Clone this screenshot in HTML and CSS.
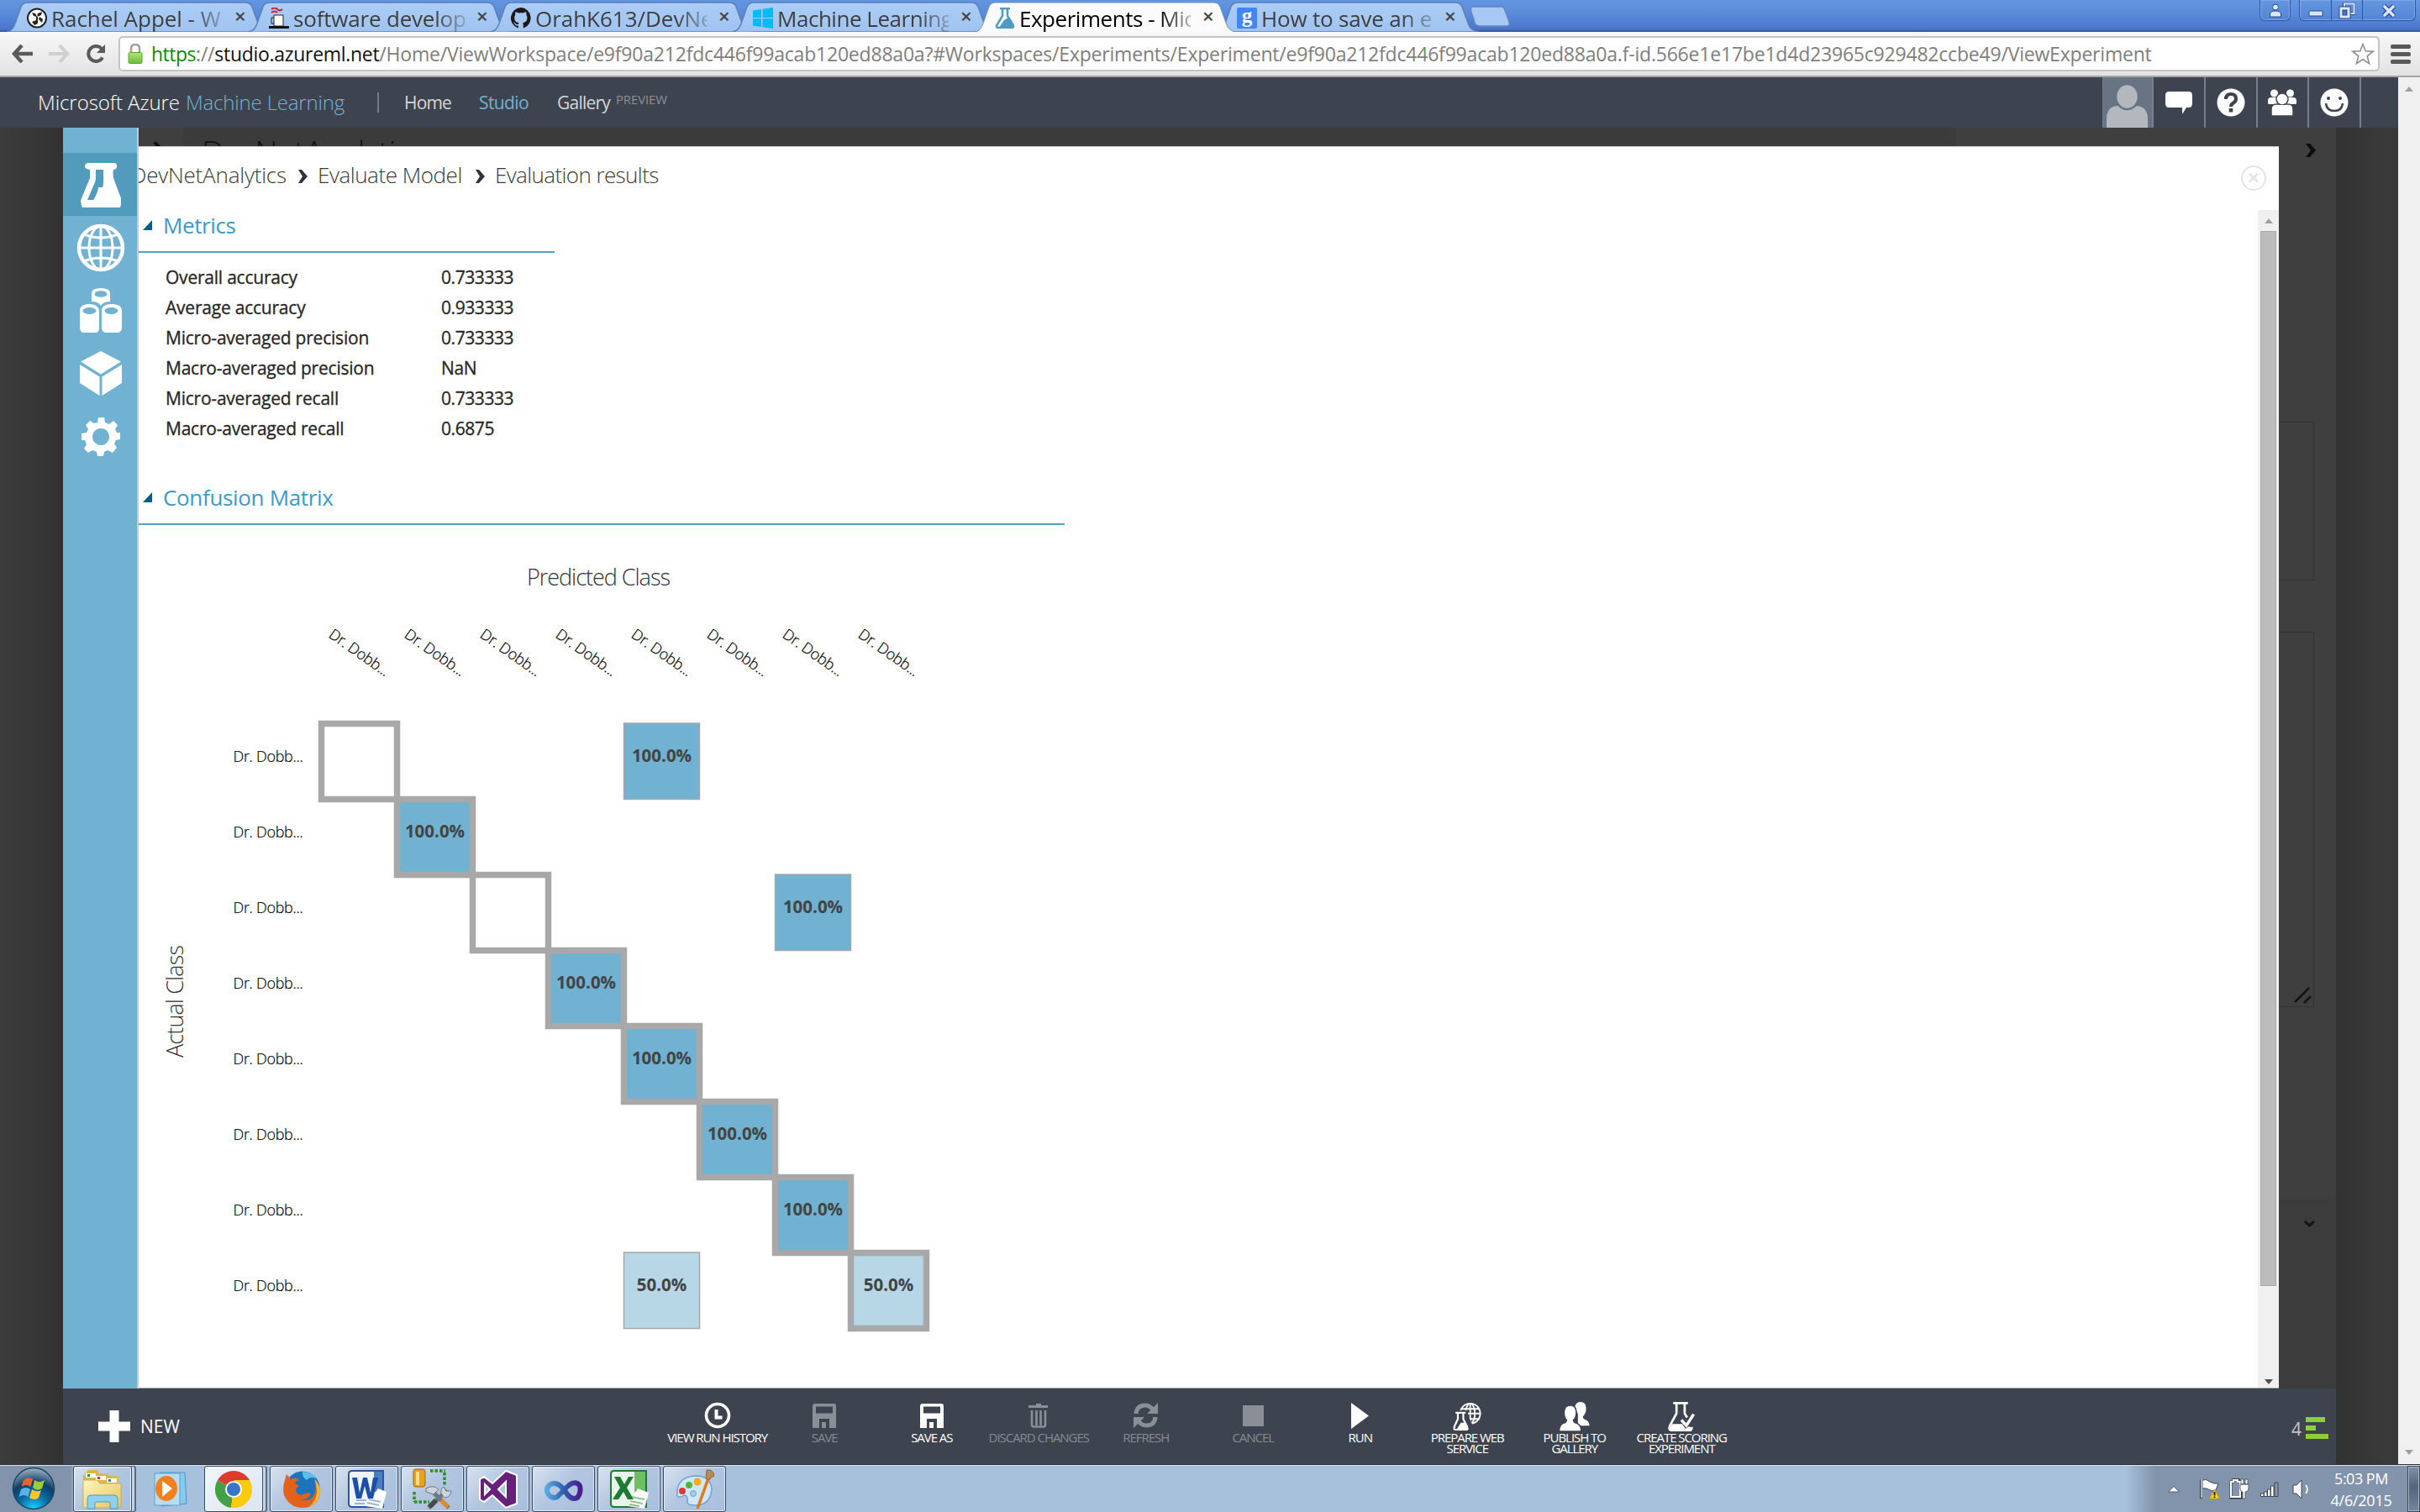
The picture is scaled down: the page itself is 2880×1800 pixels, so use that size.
FILE: index.html
```html
<!DOCTYPE html>
<html lang="en">
<head>
<meta charset="utf-8">
<title>Experiments - Microsoft Azure Machine Learning</title>
<link rel="stylesheet" href="styles.css">
</head>
<body>
<svg class="defs" aria-hidden="true">
  <defs>
    <linearGradient id="tabFill" x1="0" y1="0" x2="0" y2="1"><stop offset="0" stop-color="#abcdf8"/><stop offset="1" stop-color="#9fc3ef"/></linearGradient>
    <linearGradient id="lockFill" x1="0" y1="0" x2="0" y2="1"><stop offset="0" stop-color="#b4e07a"/><stop offset="1" stop-color="#6cbb3c"/></linearGradient>
    <radialGradient id="orbFill" cx=".5" cy="1" r="1"><stop offset="0" stop-color="#18d8ff"/><stop offset=".35" stop-color="#0b6fa8"/><stop offset=".65" stop-color="#0d3d66"/><stop offset="1" stop-color="#9fb4c6"/></radialGradient>
    <linearGradient id="paperFill" x1="0" y1="0" x2="1" y2="1"><stop offset="0" stop-color="#fff6c4"/><stop offset="1" stop-color="#e6c458"/></linearGradient>
    <linearGradient id="infFill" x1="0" y1="0" x2="1" y2="0"><stop offset="0" stop-color="#5aa9dc"/><stop offset=".5" stop-color="#2f5fae"/><stop offset="1" stop-color="#4b1c8c"/></linearGradient>
    <symbol id="tab" viewBox="0 0 312 38" preserveAspectRatio="none"><path d="M0 37.500C6 37 8 33 10 28L17 8Q19 3 25 3H284Q290 3 292 8L300 30Q303 37 312 37.500" fill="url(#tabFill)" stroke="#5b80b8" stroke-width="1.500"/></symbol>
    <symbol id="tabOn" viewBox="0 0 312 38" preserveAspectRatio="none"><path d="M0 38.500C6 37 8 33 10 28L17 8Q19 3 25 3H284Q290 3 292 8L300 30Q303 37 312 38.500" fill="#fbfbfb" stroke="#6f8fc4" stroke-width="1"/></symbol>
  </defs>
</svg>

<header class="tabs">
  <div class="tab"><svg class="tab-shape"><use href="#tab"/></svg>
    <svg class="fav" viewBox="0 0 24 25"><circle cx="12" cy="12.500" r="11" fill="#fff" stroke="#222" stroke-width="2"/><path d="M6 6l4 1 2 4-4-1zM18 5l-5 2-1 4 5-2zM6 17l5-2 2 4-4 2zM18 18l-4-4 1-3 4 3zM11 10h2v8h-2z" fill="#222"/></svg>
    <span class="tab-text">Rachel Appel - W</span><span class="tab-x">×</span></div>
  <div class="tab"><svg class="tab-shape"><use href="#tab"/></svg>
    <svg class="fav" viewBox="0 0 24 25"><path d="M3 2q4-3 7 0t6 0M3 6q4-3 7 0" stroke="#c8202c" stroke-width="2" fill="none"/><path d="M6 9h11v13H6z" fill="#fff" stroke="#222"/><path d="M6 12H3v7h3" fill="none" stroke="#222"/><path d="M0 22h24v3H0z" fill="#111"/></svg>
    <span class="tab-text ls2">software develop</span><span class="tab-x">×</span></div>
  <div class="tab"><svg class="tab-shape"><use href="#tab"/></svg>
    <svg class="fav" viewBox="0 0 24 25"><path d="M12 0a12 12.500 0 0 0-4 24.300c.6.1.8-.3.8-.6v-2.300c-3.300.7-4-1.500-4-1.500-.5-1.400-1.300-1.700-1.300-1.700-1.100-.8 0-.8 0-.8 1.200.1 1.900 1.300 1.900 1.300 1 1.900 2.800 1.300 3.500 1 .1-.8.4-1.300.8-1.600-2.700-.3-5.500-1.400-5.500-6.200 0-1.300.5-2.400 1.200-3.300-.1-.3-.5-1.600.1-3.300 0 0 1-.3 3.300 1.300a11 11 0 0 1 6 0c2.300-1.600 3.300-1.300 3.300-1.300.6 1.700.2 3 .1 3.300.8.9 1.200 2 1.200 3.300 0 4.800-2.800 5.900-5.500 6.200.4.400.8 1.100.8 2.300v3.300c0 .3.200.7.8.6A12 12.500 0 0 0 12 0z" fill="#1b1817"/></svg>
    <span class="tab-text">OrahK613/DevNet</span><span class="tab-x">×</span></div>
  <div class="tab"><svg class="tab-shape"><use href="#tab"/></svg>
    <svg class="fav" viewBox="0 0 24 25"><path d="M0 3.500l10-1.500v10H0zM11.500 1.800L24 0v12H11.500zM0 13h10v10L0 21.500zM11.500 13H24v12l-12.500-1.800z" fill="#00bcf2"/></svg>
    <span class="tab-text ls3">Machine Learning</span><span class="tab-x">×</span></div>
  <div class="tab on"><svg class="tab-shape"><use href="#tabOn"/></svg>
    <svg class="fav" viewBox="0 0 24 25"><path d="M6 1h12M9 1v9L2.500 20.500Q1 24 4 24h16q3 0 1.500-3.500L15 10V1" fill="none" stroke="#4b9cc0" stroke-width="2.500"/><path d="M11 15l5-3 5 9q1 3-1 3H5z" fill="#4b9cc0"/></svg>
    <span class="tab-text ls3">Experiments - Micro</span><span class="tab-x">×</span></div>
  <div class="tab"><svg class="tab-shape"><use href="#tab"/></svg>
    <span class="fav fav-g">g</span>
    <span class="tab-text ls2">How to save an e</span><span class="tab-x">×</span></div>
  <svg class="newtab" viewBox="0 0 50 25"><path d="M4 1h33q4 0 5 4l5 14q1 5-3 5H12q-5 0-6-4L1.500 6Q1 1 4 1z" fill="#a6c8f3" stroke="#6086c4" stroke-width="1.500"/></svg>
  <div class="winbtns">
    <div class="wb wb-user"><svg width="16" height="17" viewBox="0 0 16 17"><circle cx="8" cy="4.500" r="3.500" fill="#dbe7fa" stroke="#274a8c"/><path d="M1.500 16v-3q0-4 6.500-4t6.500 4v3z" fill="#dbe7fa" stroke="#274a8c"/></svg></div>
    <div class="wb-group">
      <div class="wb wb-min"><svg width="18" height="8" viewBox="0 0 18 8"><rect x="1" y="1" width="16" height="6" rx="1" fill="#dbe7fa" stroke="#274a8c"/></svg></div>
      <div class="wb wb-max"><svg width="20" height="20" viewBox="0 0 20 20"><path d="M7 5V1h12v12h-4" fill="none" stroke="#274a8c" stroke-width="4"/><path d="M7 5V1.500h11.500V13h-4" fill="none" stroke="#dbe7fa" stroke-width="2"/><path d="M3 7h9v10H3z" fill="#4a73c4" stroke="#274a8c" stroke-width="5"/><path d="M3 7h9v10H3z" fill="none" stroke="#dbe7fa" stroke-width="3"/></svg></div>
      <div class="wb wb-close"><svg width="18" height="16" viewBox="0 0 18 16"><path d="M3 2l12 12M15 2L3 14" stroke="#274a8c" stroke-width="6"/><path d="M3 2l12 12M15 2L3 14" stroke="#dbe7fa" stroke-width="3.500"/></svg></div>
    </div>
  </div>
</header>

<nav class="toolbar">
  <svg class="tb-icon" width="26" height="22" viewBox="0 0 26 22"><path d="M12 1L3 11l9 10M3 11h22" fill="none" stroke="#5a5a5a" stroke-width="4.500"/></svg>
  <svg class="tb-icon" width="26" height="22" viewBox="0 0 26 22"><path d="M14 1l9 10-9 10M23 11H1" fill="none" stroke="#cfcfcf" stroke-width="4"/></svg>
  <svg class="tb-icon reload" width="24" height="22" viewBox="0 0 24 22"><path d="M19 15.500A9 9 0 1 1 18 5" fill="none" stroke="#5a5a5a" stroke-width="4"/><path d="M22 0v10H12z" fill="#5a5a5a"/></svg>
  <div class="omnibox">
    <svg width="18" height="24" viewBox="0 0 18 24"><path d="M4 12V6q0-5 5-5t5 5v6" fill="none" stroke="#a0a0a0" stroke-width="2.500"/><rect x="1" y="10.500" width="16" height="13" rx="1.500" fill="url(#lockFill)" stroke="#5da233"/></svg>
    <div class="url"><span class="scheme">https</span>://<span class="host">studio.azureml.net</span>/Home/ViewWorkspace/e9f90a212fdc446f99acab120ed88a0a?#Workspaces/Experiments/Experiment/e9f90a212fdc446f99acab120ed88a0a.f-id.566e1e17be1d4d23965c929482ccbe49/ViewExperiment</div>
    <svg width="28" height="27" viewBox="0 0 28 27"><path d="M14 1.500l3.200 8.300 9 .4-7 5.600 2.400 8.900-7.600-5-7.600 5 2.400-8.900-7-5.600 9-.4z" fill="#fff" stroke="#8a8a8a" stroke-width="1.500"/></svg>
  </div>
  <div class="menu"><i></i><i></i><i></i></div>
</nav>

<div class="page">
  <div class="app">
    <header class="top">
      <span class="brand">Microsoft Azure</span><span class="brand-ml">Machine Learning</span>
      <span class="divider"></span>
      <span class="nav nav-home">Home</span><span class="nav nav-studio">Studio</span><span class="nav nav-gallery">Gallery</span><span class="preview">PREVIEW</span>
      <div class="top-icons">
        <div class="ti avatar"><svg width="61" height="60" viewBox="0 0 61 60"><path d="M6 60V50q0-16 14-16h20q15 0 15 16v10z" fill="#b2b8bd"/><ellipse cx="30.500" cy="23" rx="13.500" ry="15" fill="#b2b8bd" stroke="#687483" stroke-width="2.500"/></svg></div>
        <div class="ti"><svg width="34" height="28" viewBox="0 0 34 28"><path d="M5 1h24q4 0 4 5v9q0 5-4 5h-3l-5 8 0-8H5q-4 0-4-5V6q0-5 4-5z" fill="#fff"/></svg></div>
        <div class="ti"><svg width="34" height="34" viewBox="0 0 34 34"><circle cx="17" cy="17" r="16.500" fill="#fff"/><path d="M11 13q0-6 6-6t6 5.500q0 3-3 5-3 1.700-3 4.500" fill="none" stroke="#3e444f" stroke-width="4.200"/><rect x="14.700" y="24" width="4.600" height="4.500" fill="#3e444f"/></svg></div>
        <div class="ti"><svg width="34" height="32" viewBox="0 0 34 32"><g fill="#fff"><circle cx="7.500" cy="5" r="4.500"/><circle cx="26.500" cy="5" r="4.500"/><path d="M0 17v-3q0-4 4-4h7q3 0 3 4v4H2q-2 0-2-1zM34 17v-3q0-4-4-4h-7q-3 0-3 4v4h12q2 0 2-1z"/></g><g fill="#fff" stroke="#3e444f" stroke-width="1.500"><path d="M4 32v-8q0-6 6-6h14q6 0 6 6v8z"/><ellipse cx="17" cy="12" rx="7" ry="7"/></g><path d="M5 31v-7q0-5 5-5h14q5 0 5 5v7z" fill="#fff"/></svg></div>
        <div class="ti"><svg width="34" height="34" viewBox="0 0 34 34"><circle cx="17" cy="17" r="16.500" fill="#fff"/><circle cx="10" cy="12" r="2" fill="#3e444f"/><circle cx="24" cy="12" r="2" fill="#3e444f"/><path d="M7 18q1 9 10 9t10-9" fill="none" stroke="#3e444f" stroke-width="2.500"/></svg></div>
      </div>
    </header>

    <div class="stage">
      <div class="gutter-left"></div>
      <div class="work">
        <div class="work-row">
          <aside class="side">
            <div class="tile on"><svg width="48" height="54" viewBox="0 0 48 54"><path d="M8 0h32q3 0 3 4t-4 4v0q-1 2 0 10l9 24q1 4-1 11H2q-3-7-1-11l10-24V8q-6-1-6-4t3-4z" fill="#fff"/><path d="M18 8h9v16q0 3-1 5h-5q-1 8-6 15h-7l9-21q1-3 1-6z" fill="#529bbd"/></svg></div>
            <div class="tile"><svg width="58" height="58" viewBox="0 0 58 58" fill="none" stroke="#fff"><circle cx="29" cy="29" r="26" stroke-width="4.500"/><g stroke-width="3"><path d="M29 3v52M3 29h52M9 13q20 8 40 0M9 45q20-8 40 0"/><ellipse cx="29" cy="29" rx="14" ry="26"/></g></svg></div>
            <div class="tile"><svg width="50" height="53" viewBox="0 0 50 53"><g fill="#fff"><path d="M14 6q0-6 11-6t11 6v10q-8 0-11 5-3-5-11-5z"/><path d="M0 27q0-8 11-8t12 8v19q0 7-4 7H4q-4 0-4-7zM26 27q0-8 12-8t12 8v19q0 7-5 7H31q-5 0-5-7z"/></g><g fill="#71b1d1"><ellipse cx="25" cy="7" rx="7.500" ry="3.800"/><ellipse cx="11.500" cy="27" rx="8" ry="4"/><ellipse cx="37.500" cy="27" rx="8" ry="4"/></g></svg></div>
            <div class="tile"><svg width="50" height="53" viewBox="0 0 50 53" fill="#fff"><path d="M25 0l24 12.500-24 15L1 12.500zM0 16l23.500 14.500V53L0 38zM50 16L26.500 30.500V53L50 38z"/></svg></div>
            <div class="tile"><svg width="46" height="46" viewBox="0 0 46 46"><path fill-rule="evenodd" fill="#fff" d="M19 6l1-6h7l1 6 5 2 5-4 5 5-3 5 2 4h4v8l-5 1-2 4 3 5-5 6-6-3-4 2-1 5h-7l-1-5-5-2-5 3-5-5 3-5-2-5H0v-8l6-1 2-4-3-5 5-5 5 3zM23 13a10 10 0 1 0 .1 0z"/></svg></div>
          </aside>
          <div class="center">
            <div class="behind"><svg class="bchev" width="12" height="16" viewBox="0 0 12 16"><path d="M2 0l7 8-7 8" fill="none" stroke="#111" stroke-width="4"/></svg><span>DevNetAnalytics</span></div>
            <section class="dialog">
              <div class="crumbs">
                <span class="c1">DevNetAnalytics</span><svg class="chev" width="11" height="16" viewBox="0 0 11 16"><path d="M0 0h4l7 8-7 8H0l5-8z" fill="#2c3440"/></svg>
                <span class="c2">Evaluate Model</span><svg class="chev" width="11" height="16" viewBox="0 0 11 16"><path d="M0 0h4l7 8-7 8H0l5-8z" fill="#2c3440"/></svg>
                <span class="c3">Evaluation results</span>
                <svg class="close" width="30" height="30" viewBox="0 0 30 30" fill="none" stroke="#e4e4e4"><circle cx="15" cy="15" r="14" stroke-width="2"/><path d="M10 9.500l10 10M20 9.500l-10 10" stroke-width="2.800"/></svg>
              </div>
              <div class="dialog-body">
                <div class="content">
                  <h2 class="h-metrics"><svg width="11" height="12" viewBox="0 0 11 12"><path d="M11 0v12H0z" fill="#0d5b85"/></svg><span class="t-met">Metrics</span></h2>
                  <dl class="metrics">
                    <dt>Overall accuracy</dt><dd>0.733333</dd>
                    <dt>Average accuracy</dt><dd>0.933333</dd>
                    <dt>Micro-averaged precision</dt><dd>0.733333</dd>
                    <dt>Macro-averaged precision</dt><dd>NaN</dd>
                    <dt>Micro-averaged recall</dt><dd>0.733333</dd>
                    <dt>Macro-averaged recall</dt><dd>0.6875</dd>
                  </dl>
                  <h2 class="h-matrix"><svg width="11" height="12" viewBox="0 0 11 12"><path d="M11 0v12H0z" fill="#0d5b85"/></svg><span class="t-mat">Confusion Matrix</span></h2>
                  <svg class="chart" width="1102" height="1027" viewBox="165 625 1102 1027">
                    <text class="axis" x="627" y="697" textLength="171">Predicted Class</text>
                    <text class="axis" transform="translate(218 1259) rotate(-90)" textLength="134">Actual Class</text>
                    <g class="lab">
                      <text transform="translate(390 758) rotate(35)">Dr. Dobb...</text>
                      <text transform="translate(480 758) rotate(35)">Dr. Dobb...</text>
                      <text transform="translate(570 758) rotate(35)">Dr. Dobb...</text>
                      <text transform="translate(660 758) rotate(35)">Dr. Dobb...</text>
                      <text transform="translate(750 758) rotate(35)">Dr. Dobb...</text>
                      <text transform="translate(840 758) rotate(35)">Dr. Dobb...</text>
                      <text transform="translate(930 758) rotate(35)">Dr. Dobb...</text>
                      <text transform="translate(1020 758) rotate(35)">Dr. Dobb...</text>
                      <text x="277.500" y="907">Dr. Dobb...</text>
                      <text x="277.500" y="997">Dr. Dobb...</text>
                      <text x="277.500" y="1087">Dr. Dobb...</text>
                      <text x="277.500" y="1177">Dr. Dobb...</text>
                      <text x="277.500" y="1267">Dr. Dobb...</text>
                      <text x="277.500" y="1357">Dr. Dobb...</text>
                      <text x="277.500" y="1447">Dr. Dobb...</text>
                      <text x="277.500" y="1537">Dr. Dobb...</text>
                    </g>
                    <g class="off">
                      <rect x="742.500" y="861" width="90" height="90.500"/>
                      <rect x="922.500" y="1041" width="90" height="90.500"/>
                      <rect class="half" x="742.500" y="1491" width="90" height="90.500"/>
                    </g>
                    <g class="diag">
                      <rect class="none" x="382.500" y="861.500" width="90" height="90"/>
                      <rect x="472.500" y="951.500" width="90" height="90"/>
                      <rect class="none" x="562.500" y="1041.500" width="90" height="90"/>
                      <rect x="652.500" y="1131.500" width="90" height="90"/>
                      <rect x="742.500" y="1221.500" width="90" height="90"/>
                      <rect x="832.500" y="1311.500" width="90" height="90"/>
                      <rect x="922.500" y="1401.500" width="90" height="90"/>
                      <rect class="half" x="1012.500" y="1491.500" width="90" height="90"/>
                    </g>
                    <g class="pct">
                      <text x="787.500" y="907">100.0%</text>
                      <text x="517.500" y="997">100.0%</text>
                      <text x="967.500" y="1087">100.0%</text>
                      <text x="697.500" y="1177">100.0%</text>
                      <text x="787.500" y="1267">100.0%</text>
                      <text x="877.500" y="1357">100.0%</text>
                      <text x="967.500" y="1447">100.0%</text>
                      <text x="787.500" y="1537">50.0%</text>
                      <text x="1057.500" y="1537">50.0%</text>
                    </g>
                  </svg>
                </div>
                <div class="scroll">
                  <svg width="10" height="6" viewBox="0 0 10 6"><path d="M5 0l5 6H0z" fill="#a0a0a0"/></svg>
                  <div class="thumb"></div>
                  <svg class="dn" width="10" height="6" viewBox="0 0 10 6"><path d="M0 0h10L5 6z" fill="#505050"/></svg>
                </div>
              </div>
            </section>
          </div>
          <aside class="props">
            <svg class="p-chev" width="12" height="16" viewBox="0 0 12 16"><path d="M0 0h5l7 8-7 8H0l6-8z" fill="#0c0c0c"/></svg>
            <div class="pbox pbox1"></div>
            <div class="pbox pbox2"><svg width="22" height="22" viewBox="0 0 22 22"><path d="M2 19L19 2M13 20l8-8" stroke="#141414" stroke-width="2.800"/></svg></div>
            <div class="p-foot"><svg width="13" height="9" viewBox="0 0 13 9"><path d="M1 2l5.500 5L12 2" fill="none" stroke="#111" stroke-width="3"/></svg></div>
          </aside>
        </div>
        <footer class="cmds">
          <div class="new"><svg width="38" height="38" viewBox="0 0 38 38"><path d="M13.500 0h11v13.500H38v11H24.500V38h-11V24.500H0v-11h13.500z" fill="#fff"/></svg><span>NEW</span></div>
          <div class="cmd-list">
            <div class="cmd"><div class="ci"><svg width="32" height="32" viewBox="0 0 32 32"><circle cx="16" cy="16" r="13.500" fill="none" stroke="#fff" stroke-width="3.600"/><path d="M14.500 9v9.500h7" fill="none" stroke="#fff" stroke-width="4"/></svg></div><span>VIEW RUN HISTORY</span></div>
            <div class="cmd off"><div class="ci"><svg width="28" height="29" viewBox="0 0 28 29"><path fill-rule="evenodd" d="M3 0h22q3 0 3 3v26H0V3q0-3 3-3zM4 3.500v8h20v-8zM8 18v11h3v-7h5v7h4V18z" fill="#8a8f97"/></svg></div><span>SAVE</span></div>
            <div class="cmd"><div class="ci"><svg width="28" height="29" viewBox="0 0 28 29"><path fill-rule="evenodd" d="M3 0h22q3 0 3 3v26H0V3q0-3 3-3zM4 3.500v8h20v-8zM8 18v11h3v-7h5v7h4V18z" fill="#fff"/></svg></div><span>SAVE AS</span></div>
            <div class="cmd off"><div class="ci"><svg width="24" height="29" viewBox="0 0 24 29"><path d="M9 0h6v2h8v3H0V2h9z" fill="#8a8f97"/><path d="M4 8v17q0 2.500 2 2.500h12q2 0 2-2.500V8M9.500 8v18M14.500 8v18" fill="none" stroke="#8a8f97" stroke-width="2.600"/></svg></div><span>DISCARD CHANGES</span></div>
            <div class="cmd off"><div class="ci"><svg width="29" height="30" viewBox="0 0 29 30"><path d="M3 13Q4 3 14 3q5 0 9 5M26 17q-1 10-11 10-5 0-9-5" fill="none" stroke="#8a8f97" stroke-width="5"/><path d="M29 0v13H16zM0 30V17h13z" fill="#8a8f97"/></svg></div><span>REFRESH</span></div>
            <div class="cmd off"><div class="ci"><svg width="25" height="25" viewBox="0 0 25 25"><path d="M0 0h25v25H0z" fill="#8a8f97"/></svg></div><span>CANCEL</span></div>
            <div class="cmd"><div class="ci"><svg width="21" height="31" viewBox="0 0 21 31"><path d="M0 0l21 15.500L0 31z" fill="#fff"/></svg></div><span>RUN</span></div>
            <div class="cmd tall"><div class="ci"><svg width="36" height="34" viewBox="0 0 36 37"><g fill="none" stroke="#fff" stroke-width="2"><circle cx="22" cy="15" r="13"/><ellipse cx="22" cy="15" rx="6" ry="13"/><path d="M22 2v26M10 9h24M9 15h26M12 22h22"/></g><path d="M2 11h17v6l6 13v8H-2V27z" fill="#3e444f"/><path d="M3 14h13M6 14v8L1.500 32q-1 4 1.500 4h14q2 0 1-4L13 22v-8" fill="none" stroke="#fff" stroke-width="2.400"/><path d="M10 27h6l4 9H4z" fill="#fff"/></svg></div><span>PREPARE WEB<br>SERVICE</span></div>
            <div class="cmd tall"><div class="ci"><svg width="36" height="35" viewBox="0 0 36 36"><path d="M18 6q2-6 7-6 7 0 7 8 0 6-4 10 0 3 4 4 4 2 4 7H22V15z" fill="#fff"/><path d="M5 13Q5 4 12.500 4T20 13q0 6-3.500 9 0 3 4 4Q26 28 26 36H-1q0-8 5-10 4-1 4-4-3-3-3-9z" fill="#fff" stroke="#3e444f" stroke-width="1.600"/></svg></div><span>PUBLISH TO<br>GALLERY</span></div>
            <div class="cmd tall"><div class="ci"><svg width="34" height="35" viewBox="0 0 34 36"><path d="M7 1.500h18M11 2v12L3 29q-2 5 1 5.500h24q2-1 1.500-4M21 2v12l3 5" fill="none" stroke="#fff" stroke-width="2.800"/><path d="M3 31l3-4h12l4 6 4-3 4 2-1 4H4z" fill="#fff"/><path d="M17 22l6 7 9-14" fill="none" stroke="#fff" stroke-width="3.600"/></svg></div><span>CREATE SCORING<br>EXPERIMENT</span></div>
          </div>
          <div class="queue"><span>4</span><div class="bars"><i class="b1"></i><i class="b2"></i><i class="b3"></i></div></div>
        </footer>
      </div>
      <div class="gutter-right"></div>
    </div>
  </div>
  <div class="page-scroll">
    <svg width="10" height="6" viewBox="0 0 10 6"><path d="M5 0l5 6H0z" fill="#a0a0a0"/></svg>
    <svg width="10" height="6" viewBox="0 0 10 6"><path d="M0 0h10L5 6z" fill="#a0a0a0"/></svg>
  </div>
</div>

<footer class="taskbar">
  <div class="start"><svg width="52" height="52" viewBox="0 0 52 52"><circle cx="26" cy="26" r="24.500" fill="url(#orbFill)" stroke="#1c4563" stroke-width="1.500"/><path d="M14 16q6-5 11-1l-2.500 9q-5-4-11 0z" fill="#f0602a"/><path d="M27 16q6 4 12 0l-3 10q-6 4-11-1z" fill="#9ccb3b"/><path d="M11 27q6-4 11 0l-2.500 9q-5-4-11 0z" fill="#56b3ea"/><path d="M24 27q6 4 11 1l-3 9q-5 4-11 0z" fill="#fdc62c"/></svg></div>
  <div class="task stacked"><svg width="48" height="48" viewBox="0 0 48 48"><path d="M3 6l4-5h11l2 4h10l2 3h11v36H1V8z" fill="#d9b94e"/><path d="M4 5h12v5H4zM16 8h12v5H16zM29 11h12v5H29z" fill="#fff"/><path d="M6 6h3v3H6z" fill="#2e9b3b"/><path d="M18 9h3v3h-3z" fill="#d33"/><path d="M31 12h3v3h-3z" fill="#28c"/><path d="M1 13h16l4 4h25v27q0 2-2 2H3q-2 0-2-2z" fill="url(#paperFill)" stroke="#cfae4c"/><path d="M6 47V35q0-4 4-4h28q4 0 4 4v12h-9v-6q0-2-2-2H17q-2 0-2 2v6z" fill="#8fd0ea" stroke="#4c9cc4"/></svg></div>
  <div class="task plain"><svg width="40" height="42" viewBox="0 0 40 42"><path d="M8 1h29l2 37-30 3z" fill="#8cc8ea" stroke="#4a96c8"/><path d="M1 2h30v38H1z" fill="#b6dcf2" stroke="#58a2d0"/><ellipse cx="15" cy="20" rx="13" ry="15" fill="#f47f1f"/><path d="M10 11l12 9-12 10z" fill="#fff"/></svg></div>
  <div class="task stacked bright"><svg width="44" height="44" viewBox="0 0 44 44"><path d="M22 22L3 11a22 22 0 0 1 38 0z" fill="#dd3b2d"/><path d="M22 22L3 11a22 22 0 0 0 16 33z" fill="#43a047"/><path d="M22 22l19-11a22 22 0 0 1-22 33z" fill="#fbcb12"/><path d="M22 11h19.500L32 22z" fill="#fbcb12"/><circle cx="22" cy="22" r="10" fill="#fff"/><circle cx="22" cy="22" r="8" fill="#3874c8"/></svg></div>
  <div class="task"><svg width="46" height="46" viewBox="0 0 46 46"><circle cx="24" cy="22" r="20.500" fill="#1d74bd"/><path d="M24 2q12 0 17 8-8-3-12 2-6-4-5-10z" fill="#58c0ea"/><path d="M3 12l2-7 5 6q6-3 10 1-4 1-5 4l5 3q-4 2-4 6 3 6 9 4 5-3 9-1-3 8-12 7 12 4 17-8 2-8-1-15 9 10 6 20-5 13-20 13T2 30Q0 20 3 12z" fill="#e4611c"/><path d="M38 10q9 10 6 21-4 10-12 13 9-8 9-18 0-9-3-16z" fill="#fbc02d"/></svg></div>
  <div class="task"><svg width="46" height="46" viewBox="0 0 46 46"><path d="M5 1h37v43H5q-4 0-4-4V5q0-4 4-4z" fill="#eef4fc" stroke="#2b579a" stroke-width="2"/><path d="M31 2h10v24H31z" fill="#4b7cc4"/><path d="M36 22l10 4-5 20-20-3z" fill="#fff"/><path d="M25 35l14 3M23 39l14 3M10 36h12M8 40h12" stroke="#9db3d8" stroke-width="2"/><path d="M5 9h6l3 18 4-18h5l4 18 3-18h6l-6 25h-6l-4-15-4 15h-6z" fill="#1c50a8"/></svg></div>
  <div class="task"><svg width="50" height="50" viewBox="0 0 50 50"><rect x="2" y="1" width="14" height="21" rx="3" fill="#e5a21c" stroke="#9c6a0c"/><path d="M5 4h4v16H5z" fill="#fbe08a"/><path d="M22 3h18M39 5v16M3 28v12M3 40h18" stroke="#2e8b2e" stroke-width="3.500" stroke-dasharray="3.500 2" fill="none"/><path d="M20 47l22-21M44 47L24 27" stroke="#707880" stroke-width="5"/><path d="M21 46l8-8" stroke="#4a4a4a" stroke-width="6"/><path d="M43 46l-8-8" stroke="#e08a28" stroke-width="5"/><path d="M17 24q9-5 15 1l-6 6-9-3zM38 22l3 5 6 0q-1 8-8 8l-4-5q-1-6 3-8z" fill="#ccd3da" stroke="#707880"/></svg></div>
  <div class="task"><svg width="46" height="46" viewBox="0 0 46 46"><path fill-rule="evenodd" d="M32 1l13 5v34l-13 5-16-15-10 8-5-3V11l5-3 10 8zM32 14L23 23l9 9zM7 17v12l6-6z" fill="#68217a" stroke="#fff" stroke-width="2"/></svg></div>
  <div class="task"><svg class="inf" width="46" height="28" viewBox="0 0 46 28"><path d="M29 7q9-6 13 1 2 8-3 14-6 3-11-3L20 9Q14 3 7 6 1 10 4 17q4 7 11 4l9-9q3-4 6-5" fill="none" stroke="url(#infFill)" stroke-width="6"/></svg></div>
  <div class="task"><svg width="46" height="46" viewBox="0 0 46 46"><path d="M5 1h38v43H5q-4 0-4-4V5q0-4 4-4z" fill="#e9f5e8" stroke="#1f7a3a" stroke-width="2"/><path d="M29 2h13v24H29z" fill="#6cc060"/><path d="M33 22l13 5-5 19-20-3z" fill="#fff"/><path d="M26 32l15 3M24 37l15 3M23 41l12 2" stroke="#8cc08c" stroke-width="2"/><path d="M5 8h7l5 9 5-9h6l-8 13 8 14h-7l-5-9-6 9H3l9-14z" fill="#1e7b35"/></svg></div>
  <div class="task"><svg width="46" height="48" viewBox="0 0 46 48"><path d="M2 32Q0 9 24 8q17 0 19 15-1 20-20 20-9 0-9-4 1-8-4-8-5 4-8 1z" fill="#cfe7f6" stroke="#69a5d0" stroke-width="1.500"/><circle cx="21" cy="29" r="3.500" fill="#a9c8e6" stroke="#69a5d0"/><circle cx="8" cy="26" r="4" fill="#dc3b2d"/><circle cx="16" cy="19" r="4" fill="#56b33a"/><circle cx="26" cy="15" r="4.500" fill="#f4ab1d"/><path d="M39 11L26 47" stroke="#e07a20" stroke-width="3.500"/><path d="M37 1q8-1 9 7-4 1-6 5l-4-2z" fill="#b58b5a" stroke="#8a6538"/></svg></div>
  <div class="tray">
    <svg width="14" height="8" viewBox="0 0 14 8"><path d="M7 .5L13.500 7H.5z" fill="#fff" stroke="#4a5a6e"/></svg>
    <svg class="flag" width="24" height="25" viewBox="0 0 24 25"><path d="M1.500 1v23" stroke="#3c4654" stroke-width="3"/><path d="M3 2q5-2 9 2 5 3 10 2l-3 8q-5 2-9-1-3-2-7-1z" fill="#fff" stroke="#3c4654"/><path d="M2 1v22" stroke="#fff" stroke-width="1.200"/><path d="M17.500 13l6 11h-12z" fill="#fcd414" stroke="#c79a00"/><path d="M17.500 16v4.500M17.500 21.500v1.500" stroke="#111" stroke-width="1.800"/></svg>
    <svg class="batt" width="24" height="25" viewBox="0 0 24 25"><path d="M2 4h3V1h6v3h3v19H2z" fill="#8394ab" stroke="#2f3947" stroke-width="3"/><path d="M2 4h3V2h5v2h3v18H2z" fill="none" stroke="#fff" stroke-width="2"/><path d="M13 7h10v5q0 4-4 4v8h-3v-8q-3 0-3-4zM14 1h3v6h-3zM19 1h3v6h-3z" fill="#fff" stroke="#3c4654" stroke-width=".8"/></svg>
    <svg class="sig" width="22" height="18" viewBox="0 0 22 18"><path d="M.5 14h3.500v3.500H.5zM4.500 12H8v5.500H4.500zM8.500 9H12v8.500H8.500zM12.500 5H16v12.500h-3.500z" fill="#fff" stroke="#3c4654"/><path d="M17 1h4v16.500h-4z" fill="#8b98a8" stroke="#3c4654"/></svg>
    <svg class="snd" width="22" height="24" viewBox="0 0 22 24"><path d="M1 7h4l6-6v22l-6-6H1z" fill="#fff" stroke="#3c4654"/><path d="M16 7q4 5 0 10" fill="none" stroke="#fff" stroke-width="1.800"/></svg>
    <div class="clock"><span class="time">5:03 PM</span><span class="date">4/6/2015</span></div>
    <div class="desk"></div>
  </div>
</footer>
</body>
</html>
```
FILE: styles.css
```css
* { box-sizing: border-box; }
body {
  margin: 0; width: 2880px; height: 1800px; overflow: hidden;
  display: flex; flex-direction: column;
  font-family: "Open Sans", "Noto Sans", sans-serif; background: #3b3b3b; color: #333;
}
svg { display: block; flex: none; }
span { white-space: nowrap; }
.defs { position: absolute; width: 0; height: 0; }

/* browser tabs */
.tabs { height: 38px; flex: none; display: flex; padding-left: 20px; background: linear-gradient(#6396e0, #5a8ada 45%, #4a76cc 92%, #3a5da6 96%); }
.tab { position: relative; width: 288px; height: 38px; display: flex; align-items: center; padding: 5px 0 0 12px; flex: none; }
.tab.on { z-index: 2; }
.tab-shape { position: absolute; left: -12px; top: 0; width: 312px; height: 38px; }
.fav { position: relative; width: 24px; height: 25px; flex: none; }
.fav-g { background: #4285f4; color: #fff; font: 700 25px/20px "Liberation Serif", serif; text-align: center; border-radius: 2px; }
.tab-text { position: relative; width: 204px; margin-left: 5px; overflow: hidden; font-size: 26px; line-height: 34px; color: #3e3e3e; letter-spacing: -.03px; -webkit-mask-image: linear-gradient(90deg, #000 82%, rgba(0,0,0,.25)); mask-image: linear-gradient(90deg, #000 82%, rgba(0,0,0,.25)); }
.tab.on .tab-text { color: #000; }
.tab-text.ls2 { letter-spacing: -.19px; }
.tab-text.ls3 { letter-spacing: -.47px; }
.tab-x { position: relative; margin-left: 14px; font-size: 24px; line-height: 24px; font-weight: 600; color: #444; margin-top: -5px; }
.newtab { width: 50px; height: 25px; margin: 7px 0 0 1px; }
.winbtns { margin-left: auto; padding-right: 5px; display: flex; gap: 10px; }
.wb { height: 25px; display: flex; align-items: center; justify-content: center; }
.wb-user { width: 37px; border: 1px solid #2f56a4; border-top: 0; border-radius: 0 0 6px 6px; box-shadow: inset 0 0 0 1px #80a8e6; }
.wb-group { display: flex; height: 25px; border: 1px solid #2f56a4; border-top: 0; border-radius: 0 0 6px 6px; box-shadow: inset 0 0 0 1px #80a8e6; }
.wb-min { width: 37px; padding-top: 6px; }
.wb-max { width: 38px; border-left: 1px solid #2f56a4; border-right: 1px solid #2f56a4; }
.wb-close { width: 62px; }

/* address bar */
.toolbar { height: 54px; flex: none; display: flex; align-items: center; padding: 0 10px 0 14px; background: linear-gradient(#f8f8f8, #e2e2e2); border-bottom: 2px solid #a5a5a5; }
.tb-icon + .tb-icon { margin-left: 17px; }
.tb-icon + .tb-icon.reload { margin-left: 20px; }
.omnibox { width: 2691px; height: 42px; margin-left: 14px; padding: 0 4px 0 9px; display: flex; align-items: center; background: #fff; border: 2px solid #c4c4c4; border-radius: 5px; }
.url { flex: 1; margin-left: 10px; font-size: 23px; line-height: 36px; letter-spacing: -.202px; color: #7e7e7e; white-space: nowrap; }
.scheme { color: #0a8a0a; letter-spacing: -.5px; }
.host { color: #111; letter-spacing: -.3px; }
.menu { margin-left: 13px; width: 24px; display: grid; gap: 4px; }
.menu i { height: 5px; background: #595959; border-radius: 2px; }

/* page */
.page { flex: 1; display: flex; min-height: 0; border-bottom: 1px solid #2d3239; }
.page-scroll { width: 26px; background: #f0f0f0; display: flex; flex-direction: column; justify-content: space-between; align-items: center; padding: 11px 0; }
.app { width: 2854px; display: flex; flex-direction: column; }
.top { height: 60px; flex: none; display: flex; align-items: center; background: #3e444f; padding-left: 45px; }
.brand { width: 176px; margin-top: -1px; font-size: 24px; font-weight: 300; letter-spacing: -.06px; color: #fff; }
.brand-ml { width: 228px; margin-top: -1px; font-size: 24px; font-weight: 300; letter-spacing: -.17px; color: #71b1d1; }
.divider { width: 2px; height: 24px; background: #767b84; margin-right: 30px; }
.nav { font-size: 21px; color: #d4d6d8; }
.nav-home { width: 89px; letter-spacing: -.84px; }
.nav-studio { width: 93px; letter-spacing: -.61px; color: #71b1d1; }
.nav-gallery { width: 70px; letter-spacing: -.78px; }
.preview { font-size: 15px; letter-spacing: -.15px; color: #8b9098; margin-bottom: 8px; }
.top-icons { margin-left: auto; display: flex; padding-right: 44px; }
.ti { width: 61.700px; height: 60px; display: flex; align-items: center; justify-content: center; border-right: 2px solid #787e87; }
.ti.avatar { background: #687483; border-left: 1px solid #787e87; }

.stage { flex: 1; display: flex; min-height: 0; }
.gutter-left { width: 75px; background: linear-gradient(90deg, #3c3c3c, #323232); }
.gutter-right { width: 74px; background: linear-gradient(90deg, #323232, #3a3a3a 80%); }
.work { width: 2705px; display: flex; flex-direction: column; }
.work-row { height: 1501px; display: flex; }
.side { width: 90px; padding-top: 30px; background: #71b1d1; border-right: 2px solid #c9c9c9; }
.tile { height: 75px; display: flex; align-items: center; justify-content: center; padding-left: 1px; }
.tile.on { background: #529bbd; padding-top: 2px; }
.center { width: 2547px; display: flex; flex-direction: column; }
.behind { height: 22px; overflow: hidden; position: relative; background: linear-gradient(90deg, #3f3f3f 54px, #3b3b3b 54px 2162px, #3f3f3f 2162px); color: #111; display: flex; padding-left: 17px; }
.bchev { margin-top: 17px; width: 12px; }
.behind span { margin-left: 46px; font-size: 38px; font-weight: 300; line-height: 58px; letter-spacing: -.64px; }
.dialog { flex: 1; background: #fff; border-top: 1px solid #ccc; border-bottom: 1px solid #9a9ea5; display: flex; flex-direction: column; min-height: 0; }
.crumbs { height: 61px; flex: none; display: flex; align-items: center; padding-top: 4px; font-size: 26px; font-weight: 300; color: #3a3a3a; overflow: hidden; }
.c1 { margin-left: -9px; width: 199px; letter-spacing: -.2px; }
.c2 { margin-left: 12px; width: 188px; letter-spacing: -.45px; }
.c3 { margin-left: 12px; letter-spacing: -.6px; }
.chev { margin-top: 4px; }
.close { margin: 8px 15px 0 auto; }
.dialog-body { flex: 1; display: flex; min-height: 0; }
.content { flex: 1; }
h2 { margin: 0; height: 65px; display: flex; align-items: center; padding: 1px 0 0 5px; gap: 13px; font-size: 26px; font-weight: 400; line-height: 62px; color: #3a9bc9; border-bottom: 2px solid #4ea3c6; }
.h-metrics { width: 495px; }
.h-matrix { width: 1102px; margin-top: 32px; }
.t-met { letter-spacing: -.4px; }
.t-mat { letter-spacing: -.33px; }
.metrics { margin: 0; padding: 11px 0 0 32px; display: grid; grid-template-columns: 328px 200px; grid-auto-rows: 36px; font-size: 21px; line-height: 36px; letter-spacing: -.22px; color: #262626; -webkit-text-stroke: .3px #262626; }
.metrics dt, .metrics dd { margin: 0; white-space: nowrap; }
.metrics dd { letter-spacing: -.42px; }
.axis { font-size: 27px; font-weight: 300; fill: #333; }
.lab { font-size: 18px; font-weight: 300; letter-spacing: -.3px; fill: #000; stroke: #000; stroke-width: .2px; }
.off rect { fill: #71b1d1; stroke: #a8a8a8; stroke-width: 1.500px; }
.diag rect { fill: #71b1d1; stroke: #a8a8a8; stroke-width: 7.500px; }
.diag .none { fill: #fff; }
.off .half, .diag .half { fill: #b7d6e6; }
.pct { font-size: 20.500px; font-weight: 700; text-anchor: middle; fill: #444; }
.scroll { width: 25px; margin-top: 14px; background: #f0f0f0; display: flex; flex-direction: column; align-items: center; padding: 10px 0 4px; }
.thumb { width: 19px; height: 1256px; margin-top: 9px; background: #bcbcbc; border: 1px solid #a9a9a9; }
.dn { margin-top: auto; }
.props { width: 68px; background: #3f3f3f; display: flex; flex-direction: column; }
.p-chev { margin: 19px 0 0 32px; }
.pbox { width: 42px; border: 1px solid #323232; border-left: 0; }
.pbox1 { height: 189px; margin-top: 315px; }
.pbox2 { height: 447px; margin-top: 61px; display: flex; align-items: flex-end; justify-content: flex-end; padding: 0 2px 2px 0; }
.p-foot { flex: 1; margin-top: 229px; background: #3c3c3c; padding: 24px 0 0 30px; }

/* command bar */
.cmds { flex: 1; display: flex; align-items: flex-start; background: #3e444f; padding-left: 42px; }
.new { display: flex; align-items: center; gap: 12px; margin-top: 26px; width: 673px; color: #fff; font-size: 21px; }
.cmd-list { display: flex; }
.cmd { width: 127.500px; padding-top: 14px; text-align: center; color: #fff; font-size: 15px; line-height: 13px; letter-spacing: -1.050px; }
.ci { height: 38px; padding-bottom: 2px; display: flex; align-items: center; justify-content: center; }
.tall .ci { padding-bottom: 0; }
.cmd.off { color: #858a92; }
.queue { margin: 30px 9px 0 auto; display: flex; gap: 5px; color: #c2c5c9; font-size: 21px; line-height: 36px; }
.bars { width: 27px; padding-top: 4px; display: flex; flex-direction: column; gap: 4px; }
.bars i { height: 6px; background: #8fd03a; }
.b1 { width: 23px; }
.b2 { width: 12px; }
.b3 { width: 27px; }

/* taskbar */
.taskbar { height: 56px; flex: none; display: flex; border-top: 1px solid #d5e2f0; background: linear-gradient(90deg, #8294ab 84px, #a7c0dc 90px, #a7c0dc 2530px, #8294ab 2565px); }
.start { width: 87px; padding: 1px 0 0 14px; }
.task { width: 75px; margin-right: 3px; border: 1px solid #39485c; border-radius: 3px; box-shadow: inset 0 0 0 1px #dde8f4; background: linear-gradient(135deg, #d9e3f0, #b2c6e0 45%, #a8bfdc); display: flex; align-items: center; justify-content: center; }
.task.stacked { width: 70px; margin-right: 8px; box-shadow: inset 0 0 0 1px #eef4fb, 4px 0 0 -1px #c4d4e8, 5px 0 0 0 #5b6b80; }
.task.plain { border-color: transparent; background: none; box-shadow: none; }
.task.bright { background: linear-gradient(135deg, #f2f6fb, #dbe5f1); }
.inf { margin-top: 4px; }
.tray { margin-left: auto; display: flex; align-items: center; color: #fff; }
.flag { margin-left: 24px; }
.batt { margin-left: 11px; }
.sig { margin-left: 13px; }
.snd { margin-left: 16px; }
.clock { width: 110px; margin-left: 5px; display: flex; flex-direction: column; align-items: center; font-size: 18px; line-height: 26px; }
.time { letter-spacing: -.5px; }
.date { letter-spacing: -.24px; }
.desk { width: 15px; height: 55px; border: 1px solid #39485c; box-shadow: inset 0 0 0 1px #a9b6c6; background: linear-gradient(#8291a5, #54647a 45%, #75869c); }
```
